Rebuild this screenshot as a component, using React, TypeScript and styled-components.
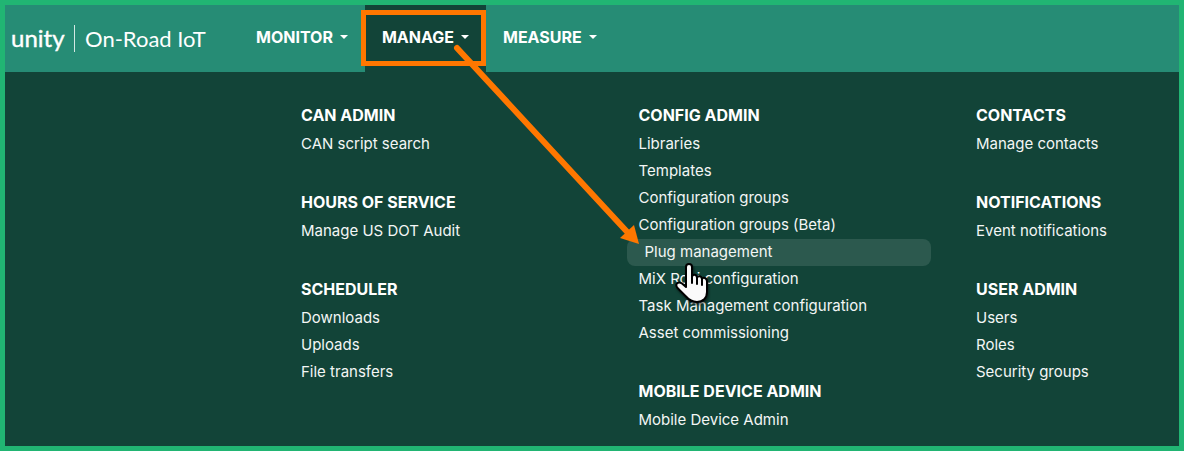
import React from "react";
import styled, { createGlobalStyle } from "styled-components";

const GlobalStyle = createGlobalStyle`
  * { box-sizing: border-box; }
  body { margin: 0; background: #124438; }
`;

const Frame = styled.div`
  position: relative;
  border: 5px solid #21b573;
  background: #124438;
  color: #fff;
  font-family: Inter, "Liberation Sans", sans-serif;
`;

const Header = styled.header`
  display: flex;
  height: 67px;
  background: #268c75;
`;

const Brand = styled.a`
  display: flex;
  align-items: center;
  width: 234px;
  padding-left: 6px;
  color: #fff;
  text-decoration: none;
  font-family: Lato, "Liberation Sans", sans-serif;
  white-space: nowrap;
`;

const Wordmark = styled.span`
  width: 63px;
  font-size: 24px;
  line-height: 28px;
  padding-bottom: 2px;
  -webkit-text-stroke: 0.4px #fff;
`;

const Product = styled.span`
  border-left: 1px solid #d3e8e3;
  padding-left: 10px;
  font-size: 22px;
  line-height: 27px;
`;

const Nav = styled.nav`
  display: flex;
`;

const NavButton = styled.button<{ $active?: boolean }>`
  position: relative;
  display: flex;
  align-items: center;
  gap: 7px;
  padding: 0 17px 3px;
  border: 0;
  background: ${(p) => (p.$active ? "#124438" : "transparent")};
  color: #fff;
  font: 700 16px/24px Inter, "Liberation Sans", sans-serif;
`;

const Caret = styled.span`
  border: 4px solid transparent;
  border-top-color: #fff;
  border-bottom: 0;
`;

const Callout = styled.span`
  position: absolute;
  inset: 5px 0 6px -4px;
  border: 5px solid #ff7700;
`;

const Menu = styled.div`
  display: grid;
  grid-template-columns: 1fr 1fr 215px;
  padding: 29px 0 12px 284px;
`;

const Column = styled.div`
  display: flex;
  flex-direction: column;
  gap: 30px;
`;

const Heading = styled.h2`
  margin: 0 0 2px;
  padding-left: 12px;
  font-size: 16px;
  line-height: 28px;
  font-weight: 700;
`;

const List = styled.ul`
  margin: 0 33px 0 0;
  padding: 0;
  list-style: none;
`;

const Item = styled.li`
  position: relative;
`;

const MenuLink = styled.a<{ $hover?: boolean }>`
  display: block;
  padding: 0 0 2px ${(p) => (p.$hover ? 18 : 12)}px;
  border-radius: 8px;
  background: ${(p) => (p.$hover ? "#2c594e" : "transparent")};
  color: #f3f6f5;
  font-size: 15px;
  line-height: 25px;
  text-decoration: none;
  white-space: nowrap;
`;

const Arrow = styled.svg`
  position: absolute;
  left: 445px;
  top: 35px;
  pointer-events: none;
  z-index: 1;
`;

const Hand = styled.svg`
  position: absolute;
  left: 46px;
  top: 22px;
  z-index: 2;
  overflow: visible;
  pointer-events: none;
  filter: drop-shadow(1px 2px 1px rgba(0, 0, 0, 0.5));
`;

const columns = [
  [
    { title: "CAN ADMIN", links: ["CAN script search"] },
    { title: "HOURS OF SERVICE", links: ["Manage US DOT Audit"] },
    { title: "SCHEDULER", links: ["Downloads", "Uploads", "File transfers"] },
  ],
  [
    {
      title: "CONFIG ADMIN",
      links: [
        "Libraries",
        "Templates",
        "Configuration groups",
        "Configuration groups (Beta)",
        "Plug management",
        "MiX Rovi configuration",
        "Task Management configuration",
        "Asset commissioning",
      ],
    },
    { title: "MOBILE DEVICE ADMIN", links: ["Mobile Device Admin"] },
  ],
  [
    { title: "CONTACTS", links: ["Manage contacts"] },
    { title: "NOTIFICATIONS", links: ["Event notifications"] },
    { title: "USER ADMIN", links: ["Users", "Roles", "Security groups"] },
  ],
];

const selected = "Plug management";

export default function App() {
  return (
    <Frame>
      <GlobalStyle />
      <Header>
        <Brand href="#">
          <Wordmark>unity</Wordmark>
          <Product>On-Road IoT</Product>
        </Brand>
        <Nav>
          {["MONITOR", "MANAGE", "MEASURE"].map((name) => (
            <NavButton key={name} $active={name === "MANAGE"}>
              {name}
              <Caret />
              {name === "MANAGE" && <Callout />}
            </NavButton>
          ))}
        </Nav>
      </Header>
      <Menu>
        {columns.map((groups, i) => (
          <Column key={i}>
            {groups.map((group) => (
              <section key={group.title}>
                <Heading>{group.title}</Heading>
                <List>
                  {group.links.map((link) => (
                    <Item key={link}>
                      <MenuLink href="#" $hover={link === selected}>
                        {link}
                      </MenuLink>
                      {link === selected && (
                        <Hand width="36" height="42" viewBox="0 0 36 42" aria-hidden="true">
                          <path
                            d="M13 26V6C13 2 19 2 19 6V16C19.500 13 23.500 13 24 16.500C25 14.500 28.500 14.500 29 18C30 16 34 16.500 34 20.500V31C34 37 30 41 24 41C19 41 15.500 38.500 13 35.500L4.500 27C1.500 23 5 20 9 22.500Z"
                            fill="#fafafa"
                            stroke="#000"
                            strokeWidth="2"
                            strokeLinejoin="round"
                          />
                          <path
                            d="M19 15V22M24 16V23M29 18V24"
                            fill="none"
                            stroke="#000"
                            strokeWidth="2"
                            strokeLinecap="round"
                          />
                        </Hand>
                      )}
                    </Item>
                  ))}
                </List>
              </section>
            ))}
          </Column>
        ))}
      </Menu>
      <Arrow width="200" height="210" viewBox="450 40 200 210" aria-hidden="true">
        <path d="M457 48L630 235" stroke="#ff7700" strokeWidth="6" strokeLinecap="round" />
        <path d="M639 244L620 238L634 225Z" fill="#ff7700" />
      </Arrow>
    </Frame>
  );
}
